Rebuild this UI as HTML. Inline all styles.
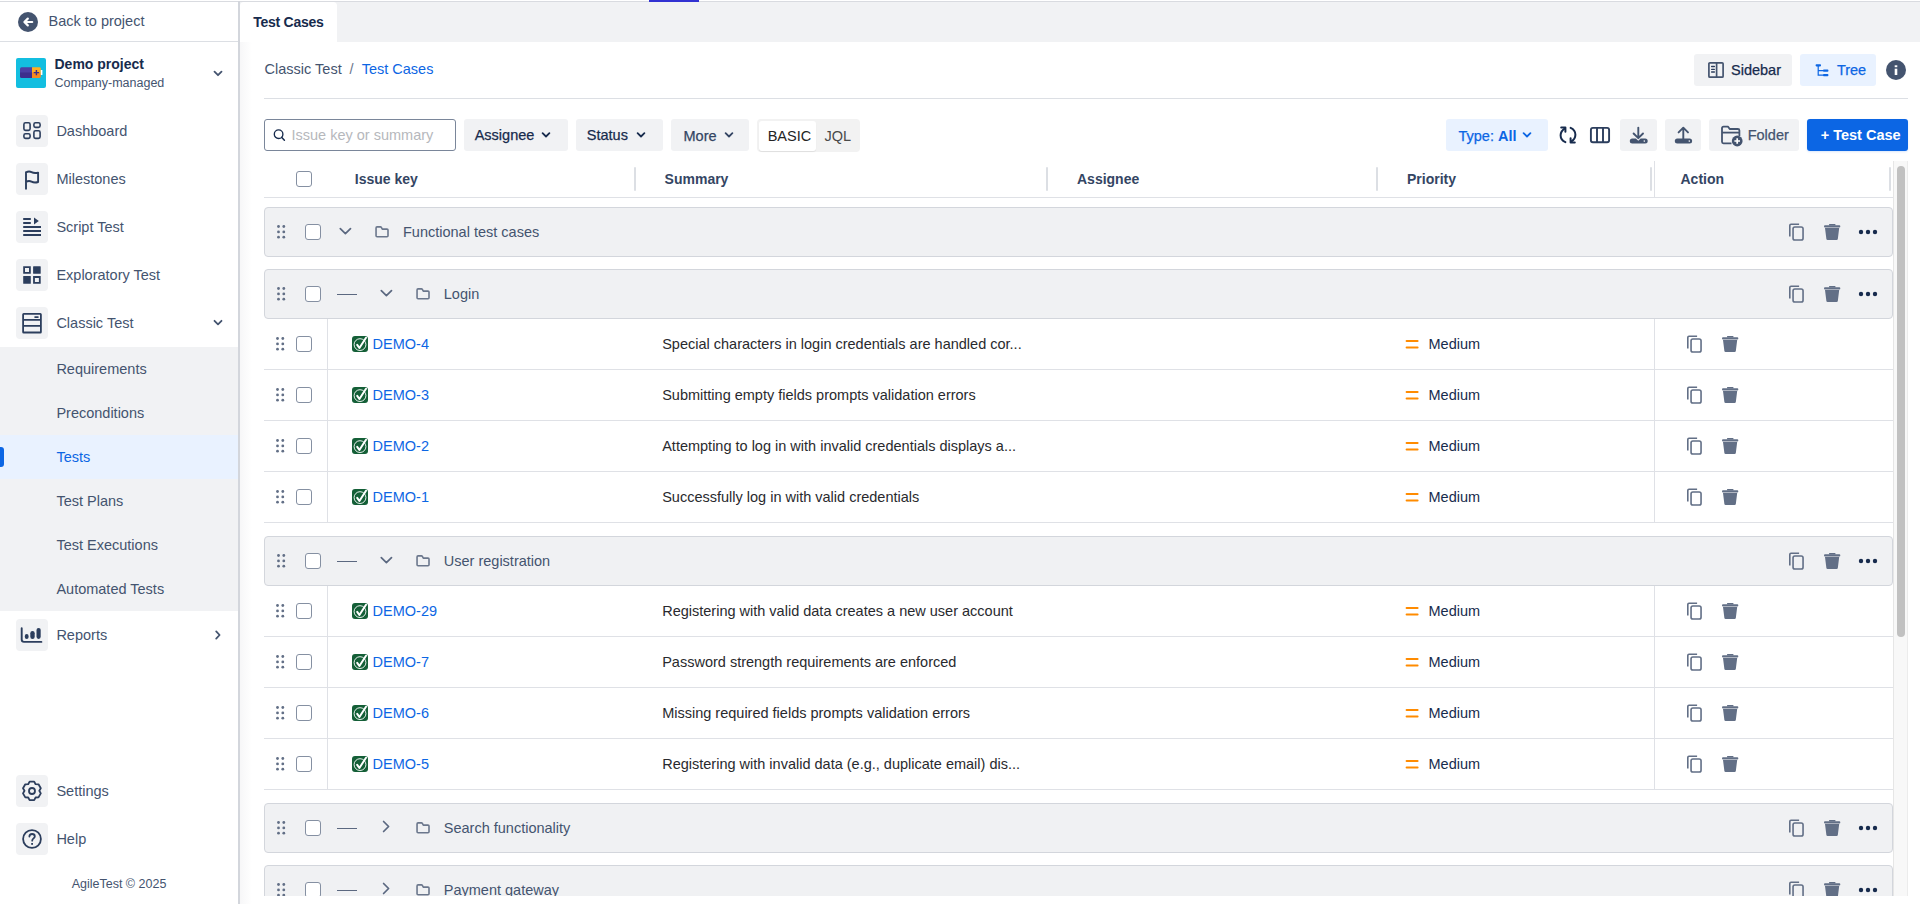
<!DOCTYPE html><html><head><meta charset="utf-8"><style>
*{box-sizing:border-box}
html,body{margin:0;padding:0}
body{width:1920px;height:904px;overflow:hidden;position:relative;background:#fff;font-family:"Liberation Sans", sans-serif;}
.a{position:absolute;display:block}
.t{position:absolute;white-space:nowrap;line-height:20px;font-family:"Liberation Sans", sans-serif;}
</style></head><body><div class="a" style="left:0px;top:1px;width:1920px;height:1px;background:#d9dbe0"></div>
<div class="a" style="left:238px;top:1px;width:2px;height:903px;background:#d3d6dc"></div>
<div class="a" style="left:240px;top:42px;width:12px;height:862px;background:linear-gradient(to right,#f7f7f8,#ffffff)"></div>
<svg class="a" style="left:18px;top:12px" width="20" height="20" viewBox="0 0 20 20"><circle cx="10" cy="10" r="10" fill="#44546f"/><path d="M14.2 10H6.6M9.8 6.6L6.4 10l3.4 3.4" stroke="#fff" stroke-width="2.2" fill="none" stroke-linecap="round" stroke-linejoin="round"/></svg>
<div class="t" style="left:48.5px;top:11.18px;font-size:14.5px;color:#44546f;">Back to project</div>
<div class="a" style="left:0px;top:41px;width:238px;height:1px;background:#dcdfe4"></div>
<svg class="a" style="left:16px;top:58px" width="30" height="30" viewBox="0 0 30 30"><rect width="30" height="30" rx="2" fill="#13bee0"/><path d="M5.5 9.2H16.5V16H4V10.7Q4 9.2 5.5 9.2z" fill="#4b3fa3"/><path d="M4 14.6H16V19.9H5.5Q4 19.9 4 18.4z" fill="#3d2f8c"/><path d="M16 9.2H23.4Q24.8 9.2 24.8 10.6V16H16z" fill="#ffae22"/><path d="M16 14.6H24.8V18.5Q24.8 19.9 23.4 19.9H16z" fill="#f78a1f"/><rect x="24.8" y="12" width="1.6" height="5" fill="#fff"/><path d="M20.4 11.9v5.4M17.7 14.6h5.4" stroke="#3b2b8a" stroke-width="1.4"/></svg>
<div class="t" style="left:54.5px;top:53.75px;font-size:14px;color:#172b4d;font-weight:bold;">Demo project</div>
<div class="t" style="left:54.5px;top:73.17px;font-size:12.5px;color:#44546f;">Company-managed</div>
<svg class="a" style="left:212px;top:69px" width="12" height="8" viewBox="0 0 12 8"><path d="M2.5 2.7l3.5 3.5 3.5-3.5" stroke="#44546f" stroke-width="1.8" fill="none" stroke-linecap="round" stroke-linejoin="round"/></svg>
<div class="a" style="left:16px;top:115px;width:32px;height:32px;background:#f1f2f4;border-radius:4px"></div>
<svg class="a" style="left:16px;top:115px" width="32" height="32" viewBox="0 0 32 32"><g fill="none" stroke="#2c3e5d" stroke-width="1.6"><rect x="7.9" y="7.8" width="6.2" height="7.6" rx="1.6"/><rect x="17.9" y="7.8" width="6.2" height="4.6" rx="1.6"/><rect x="7.9" y="18.8" width="6.2" height="4.6" rx="1.6"/><rect x="17.9" y="15.8" width="6.2" height="7.6" rx="1.6"/></g></svg>
<div class="t" style="left:56.4px;top:120.98px;font-size:14.5px;color:#44546f;">Dashboard</div>
<div class="a" style="left:16px;top:163px;width:32px;height:32px;background:#f1f2f4;border-radius:4px"></div>
<svg class="a" style="left:16px;top:163px" width="32" height="32" viewBox="0 0 32 32"><path d="M10 26.6V8.4M10 9.3c2-1.1 3.9-1.1 5.5-.2 1.6.9 3.6 1.4 6.6.5V19c-3 1-5 .5-6.6-.4-1.6-.9-3.5-.9-5.5.2" fill="none" stroke="#2c3e5d" stroke-width="1.9" stroke-linejoin="round"/></svg>
<div class="t" style="left:56.4px;top:168.98px;font-size:14.5px;color:#44546f;">Milestones</div>
<div class="a" style="left:16px;top:211px;width:32px;height:32px;background:#f1f2f4;border-radius:4px"></div>
<svg class="a" style="left:16px;top:211px" width="32" height="32" viewBox="0 0 32 32"><g stroke="#2c3e5d" stroke-width="1.8"><path d="M7.2 8h7.6M7.2 12h7.6M7.2 16h17.8M7.2 20h17.8M7.2 24h17.8"/></g><path d="M18 6.4v7.2l4.8-3.6z" fill="#2c3e5d"/></svg>
<div class="t" style="left:56.4px;top:216.98px;font-size:14.5px;color:#44546f;">Script Test</div>
<div class="a" style="left:16px;top:259px;width:32px;height:32px;background:#f1f2f4;border-radius:4px"></div>
<svg class="a" style="left:16px;top:259px" width="32" height="32" viewBox="0 0 32 32"><g fill="#2c3e5d"><path fill-rule="evenodd" d="M7.2 7.2h7.6v7.6H7.2zM9 9v4h4V9z"/><rect x="17.1" y="7.2" width="7.6" height="7.6" rx=".5"/><rect x="7.2" y="17.1" width="7.6" height="7.6" rx=".5"/><path fill-rule="evenodd" d="M17.1 17.1h7.6v7.6h-7.6zM18.9 18.9v4h4v-4z"/></g></svg>
<div class="t" style="left:56.4px;top:264.98px;font-size:14.5px;color:#44546f;">Exploratory Test</div>
<div class="a" style="left:16px;top:307px;width:32px;height:32px;background:#f1f2f4;border-radius:4px"></div>
<svg class="a" style="left:16px;top:307px" width="32" height="32" viewBox="0 0 32 32"><g fill="none" stroke="#2c3e5d" stroke-width="1.8"><rect x="7.1" y="6.9" width="17.8" height="18.6" rx=".6"/><path d="M7.1 12.9h17.8M7.1 18.9h17.8"/></g><rect x="18.2" y="9.2" width="4.6" height="1.8" rx=".9" fill="#2c3e5d"/></svg>
<div class="t" style="left:56.4px;top:312.98px;font-size:14.5px;color:#44546f;">Classic Test</div>
<svg class="a" style="left:210px;top:317px" width="16" height="12" viewBox="0 0 16 12"><path d="M4.5 3.8l3.5 3.5 3.5-3.5" stroke="#44546f" stroke-width="1.8" fill="none" stroke-linecap="round" stroke-linejoin="round"/></svg>
<div class="a" style="left:0px;top:347px;width:238px;height:264px;background:#f1f2f4"></div>
<div class="a" style="left:0px;top:435px;width:238px;height:44px;background:#e9f2ff"></div>
<div class="a" style="left:0px;top:447px;width:4px;height:20px;background:#0c66e4;border-radius:0 3px 3px 0"></div>
<div class="t" style="left:56.4px;top:358.98px;font-size:14.5px;color:#44546f;">Requirements</div>
<div class="t" style="left:56.4px;top:402.98px;font-size:14.5px;color:#44546f;">Preconditions</div>
<div class="t" style="left:56.4px;top:446.98px;font-size:14.5px;color:#0c66e4;">Tests</div>
<div class="t" style="left:56.4px;top:490.98px;font-size:14.5px;color:#44546f;">Test Plans</div>
<div class="t" style="left:56.4px;top:534.98px;font-size:14.5px;color:#44546f;">Test Executions</div>
<div class="t" style="left:56.4px;top:578.98px;font-size:14.5px;color:#44546f;">Automated Tests</div>
<div class="a" style="left:16px;top:619px;width:32px;height:32px;background:#f1f2f4;border-radius:4px"></div>
<svg class="a" style="left:16px;top:619px" width="32" height="32" viewBox="0 0 32 32"><g fill="none" stroke="#2c3e5d" stroke-linecap="round"><path d="M5.7 9.2v11.4c0 1.6.9 2.3 2.3 2.3h17.4" stroke-width="1.9"/></g><g fill="#2c3e5d"><rect x="8.8" y="15" width="3.8" height="4.9" rx="1.9"/><rect x="14.3" y="12.1" width="4.4" height="7.8" rx="2.2"/><rect x="20.5" y="9" width="4.2" height="10.9" rx="2.1"/></g></svg>
<div class="t" style="left:56.4px;top:624.98px;font-size:14.5px;color:#44546f;">Reports</div>
<svg class="a" style="left:210px;top:629px" width="16" height="12" viewBox="0 0 16 12"><path d="M6.2 2.4l3.4 3.6-3.4 3.6" stroke="#44546f" stroke-width="1.8" fill="none" stroke-linecap="round" stroke-linejoin="round"/></svg>
<div class="a" style="left:16px;top:775px;width:32px;height:32px;background:#f1f2f4;border-radius:4px"></div>
<svg class="a" style="left:16px;top:775px" width="32" height="32" viewBox="0 0 32 32"><path fill="none" stroke="#2c3e5d" stroke-width="1.8" stroke-linejoin="round" d="M13.6 6.6h4.6l1.4 2.6 2.9.1 2.3 4-1.5 2.5 1.5 2.6-2.3 4-2.9.1-1.4 2.6h-4.6l-1.4-2.6-2.9-.1-2.3-4 1.5-2.6-1.5-2.5 2.3-4 2.9-.1z"/><circle cx="16" cy="16" r="3" fill="none" stroke="#2c3e5d" stroke-width="1.8"/></svg>
<div class="t" style="left:56.4px;top:780.98px;font-size:14.5px;color:#44546f;">Settings</div>
<div class="a" style="left:16px;top:823px;width:32px;height:32px;background:#f1f2f4;border-radius:4px"></div>
<svg class="a" style="left:16px;top:823px" width="32" height="32" viewBox="0 0 32 32"><circle cx="16" cy="16" r="8.9" fill="none" stroke="#2c3e5d" stroke-width="1.8"/><path d="M13.4 13.6c0-1.6 1.2-2.6 2.7-2.6s2.7 1 2.7 2.4c0 1.9-2.6 2.1-2.6 4.3" fill="none" stroke="#2c3e5d" stroke-width="1.8" stroke-linecap="round"/><rect x="15.2" y="20" width="1.8" height="1.8" fill="#2c3e5d"/></svg>
<div class="t" style="left:56.4px;top:828.98px;font-size:14.5px;color:#44546f;">Help</div>
<div class="t" style="left:0;width:238px;text-align:center;top:876.47px;font-size:12.5px;color:#44546f;line-height:16px">AgileTest © 2025</div>
<div class="a" style="left:240px;top:2px;width:1680px;height:40px;background:#f1f2f4"></div>
<div class="a" style="left:240px;top:2px;width:97px;height:40px;background:#fff;border-radius:4px 4px 0 0"></div>
<div class="a" style="left:649px;top:0px;width:50px;height:2px;background:#3232d2"></div>
<div class="t" style="left:253.2px;top:12.05px;font-size:14px;color:#172b4d;font-weight:bold;letter-spacing:-0.25px;">Test Cases</div>
<div class="t" style="left:264.6px;top:58.88px;font-size:14.5px;color:#44546f;">Classic Test</div>
<div class="t" style="left:349.5px;top:58.88px;font-size:14.5px;color:#6b778c;">/</div>
<div class="t" style="left:361.7px;top:58.88px;font-size:14.5px;color:#0c66e4;">Test Cases</div>
<div class="a" style="left:264px;top:98px;width:1644px;height:1px;background:#dcdfe4"></div>
<div class="a" style="left:1694px;top:54px;width:98px;height:32px;background:#f1f2f4;border-radius:3px"></div>
<svg class="a" style="left:1706px;top:60px" width="20" height="20" viewBox="0 0 20 20"><g fill="none" stroke="#44546f" stroke-width="1.7"><rect x="2.9" y="2.8" width="14.2" height="14.4" rx="1"/><path d="M10.6 2.8v14.4"/></g><g stroke="#2c3e5d" stroke-width="1.3" stroke-linecap="round"><path d="M5.6 6.5h2.8M5.6 9.3h2.8M5.6 12h2.8"/></g></svg>
<div class="t" style="left:1731px;top:59.98px;font-size:14.5px;color:#172b4d;-webkit-text-stroke:0.25px currentColor;">Sidebar</div>
<div class="a" style="left:1800px;top:54px;width:76px;height:32px;background:#e9f2ff;border-radius:3px"></div>
<svg class="a" style="left:1814px;top:62px" width="16" height="16" viewBox="0 0 16 16"><g fill="#0c66e4"><rect x="1.6" y="2.2" width="5.4" height="2.2" rx=".8"/><rect x="9" y="7.5" width="5.4" height="2.2" rx=".8"/><rect x="9" y="12" width="5.4" height="2.2" rx=".8"/></g><path d="M4.2 4v9.1h5M4.2 8.6h5" fill="none" stroke="#0c66e4" stroke-width="1.2"/></svg>
<div class="t" style="left:1836.9px;top:59.98px;font-size:14.5px;color:#0c66e4;-webkit-text-stroke:0.25px currentColor;">Tree</div>
<svg class="a" style="left:1886px;top:60px" width="20" height="20" viewBox="0 0 20 20"><circle cx="10" cy="10" r="10" fill="#44546f"/><rect x="8.7" y="5.3" width="2.6" height="1.9" fill="#fff"/><rect x="8.7" y="8.7" width="2.6" height="6.3" fill="#fff"/></svg>
<div class="a" style="left:264px;top:119px;width:192px;height:32px;border:1px solid #7a869a;border-radius:3px;background:#fff"></div>
<svg class="a" style="left:272px;top:127px" width="16" height="16" viewBox="0 0 16 16"><circle cx="6.6" cy="7.2" r="4.3" fill="none" stroke="#172b4d" stroke-width="1.35"/><path d="M9.8 10.4l2.6 2.8" stroke="#172b4d" stroke-width="1.5" stroke-linecap="round"/></svg>
<div class="t" style="left:291.5px;top:124.98px;font-size:14.5px;color:#b6b8bc;">Issue key or summary</div>
<div class="a" style="left:464px;top:119px;width:104px;height:32px;background:#f1f2f4;border-radius:3px"></div>
<div class="t" style="left:474.7px;top:124.98px;font-size:14.5px;color:#172b4d;-webkit-text-stroke:0.25px currentColor;">Assignee</div>
<svg class="a" style="left:541px;top:131px" width="10" height="8" viewBox="0 0 10 8"><path d="M1.6 2.2l3.4 3.3 3.4-3.3" stroke="#172b4d" stroke-width="1.8" fill="none" stroke-linecap="round" stroke-linejoin="round"/></svg>
<div class="a" style="left:576px;top:119px;width:87px;height:32px;background:#f1f2f4;border-radius:3px"></div>
<div class="t" style="left:586.8px;top:124.98px;font-size:14.5px;color:#172b4d;-webkit-text-stroke:0.25px currentColor;">Status</div>
<svg class="a" style="left:636px;top:131px" width="10" height="8" viewBox="0 0 10 8"><path d="M1.6 2.2l3.4 3.3 3.4-3.3" stroke="#172b4d" stroke-width="1.8" fill="none" stroke-linecap="round" stroke-linejoin="round"/></svg>
<div class="a" style="left:671px;top:119px;width:78px;height:32px;background:#f1f2f4;border-radius:3px"></div>
<div class="t" style="left:683.5px;top:125.98px;font-size:14.5px;color:#344563;-webkit-text-stroke:0.25px currentColor;">More</div>
<svg class="a" style="left:724px;top:131px" width="10" height="8" viewBox="0 0 10 8"><path d="M1.6 2.2l3.4 3.3 3.4-3.3" stroke="#344563" stroke-width="1.8" fill="none" stroke-linecap="round" stroke-linejoin="round"/></svg>
<div class="a" style="left:757px;top:119px;width:103px;height:33px;background:#f2f2f2;border-radius:4px"></div>
<div class="a" style="left:759px;top:121px;width:57px;height:30px;background:#fff;border-radius:3px;box-shadow:0 1px 1px rgba(0,0,0,.08)"></div>
<div class="t" style="left:767.7px;top:125.98px;font-size:14.5px;color:#242424;">BASIC</div>
<div class="t" style="left:824.4px;top:125.98px;font-size:14.5px;color:#4a4a4a;">JQL</div>
<div class="a" style="left:1446px;top:119px;width:102px;height:32px;background:#e9f2ff;border-radius:3px"></div>
<div class="t" style="left:1458.5px;top:126.00px;font-size:14.5px;color:#0c66e4;-webkit-text-stroke:0.25px currentColor">Type: <b style="-webkit-text-stroke:0">All</b></div>
<svg class="a" style="left:1522px;top:131px" width="10" height="8" viewBox="0 0 10 8"><path d="M1.6 2.2l3.4 3.3 3.4-3.3" stroke="#0c66e4" stroke-width="1.8" fill="none" stroke-linecap="round" stroke-linejoin="round"/></svg>
<svg class="a" style="left:1558px;top:125px" width="20" height="20" viewBox="0 0 20 20"><g fill="none" stroke="#172b4d" stroke-width="2" stroke-linecap="round" stroke-linejoin="round"><path d="M7.4 17.2C4.2 15.8 2.6 13 2.6 10.3c0-2.8 1.5-5.2 4.3-7"/><path d="M3.2 2.5h4.2v4.2"/><path d="M12.6 2.8c3.2 1.4 4.8 4.2 4.8 6.9 0 2.8-1.5 5.2-4.3 7"/><path d="M16.8 17.5h-4.2v-4.2"/></g></svg>
<svg class="a" style="left:1588px;top:125px" width="24" height="20" viewBox="0 0 24 20"><g fill="none" stroke="#2c3e5d" stroke-width="1.9"><rect x="2.9" y="2.9" width="18.2" height="14.4" rx="2"/><path d="M9 2.9v14.4M15 2.9v14.4"/></g></svg>
<div class="a" style="left:1620px;top:119px;width:37px;height:32px;background:#f1f2f4;border-radius:3px"></div>
<svg class="a" style="left:1628px;top:125px" width="20" height="20" viewBox="0 0 20 20"><g fill="none" stroke="#44546f" stroke-width="1.9" stroke-linecap="round" stroke-linejoin="round"><path d="M10.3 2.6v10.2M5.6 8.5l4.7 4.7 4.7-4.7"/></g><path d="M4.3 13.6h3.6l2.4 2.2 2.4-2.2h4.5a2.5 2.5 0 0 1 0 5H4.3a2.5 2.5 0 0 1 0-5z" fill="#44546f"/><circle cx="16.3" cy="16.1" r="0.8" fill="#f1f2f4"/></svg>
<div class="a" style="left:1665px;top:119px;width:36px;height:32px;background:#f1f2f4;border-radius:3px"></div>
<svg class="a" style="left:1673px;top:125px" width="20" height="20" viewBox="0 0 20 20"><g fill="none" stroke="#44546f" stroke-width="1.9" stroke-linecap="round" stroke-linejoin="round"><path d="M10.3 3v11.6M5.6 7.4l4.7-4.7 4.7 4.7"/></g><path d="M4.3 13.6h12.3a2.5 2.5 0 0 1 0 5H4.3a2.5 2.5 0 0 1 0-5z" fill="#44546f"/><circle cx="16.3" cy="16.1" r="0.8" fill="#f1f2f4"/></svg>
<div class="a" style="left:1709px;top:119px;width:90px;height:32px;background:#f1f2f4;border-radius:3px"></div>
<svg class="a" style="left:1719px;top:124px" width="26" height="24" viewBox="0 0 26 24"><g fill="none" stroke="#44546f" stroke-width="1.8" stroke-linejoin="round"><path d="M3 4.2c0-1 .5-1.5 1.5-1.5h4.6l1.6 2.3h8.2c1 0 1.5.5 1.5 1.5v5.5"/><path d="M3 4v13.8c0 1 .5 1.5 1.5 1.5h8"/><path d="M3 8.6h17.4"/></g><circle cx="18.2" cy="17" r="5.4" fill="#44546f"/><path d="M18.2 14.2v5.6M15.4 17h5.6" stroke="#fff" stroke-width="1.7"/></svg>
<div class="t" style="left:1747.7px;top:124.98px;font-size:14.5px;color:#44546f;-webkit-text-stroke:0.25px currentColor;">Folder</div>
<div class="a" style="left:1807px;top:119px;width:101px;height:32px;background:#0c66e4;border-radius:3px;box-shadow:0 1px 2px rgba(12,102,228,.15)"></div>
<div class="t" style="left:1820.7px;top:124.98px;font-size:14.5px;color:#fff;font-weight:bold;">+ Test Case</div>
<div class="a" style="left:0;top:0;width:1920px;height:896px;overflow:hidden">
<div class="a" style="left:1893px;top:161px;width:15px;height:735px;background:#f8f8f8;border-left:1px solid #e6e6e6;border-right:1px solid #ececec"></div>
<div class="a" style="left:1897px;top:166px;width:8px;height:471px;background:#c1c1c1;border-radius:4px"></div>
<div class="a" style="left:296px;top:171px;width:16px;height:16px;border:1.5px solid #8590a2;border-radius:3px;background:#fff"></div>
<div class="t" style="left:354.8px;top:169.15px;font-size:14px;color:#344563;font-weight:bold;">Issue key</div>
<div class="t" style="left:664.6px;top:169.15px;font-size:14px;color:#344563;font-weight:bold;">Summary</div>
<div class="t" style="left:1077px;top:169.15px;font-size:14px;color:#344563;font-weight:bold;">Assignee</div>
<div class="t" style="left:1407px;top:169.15px;font-size:14px;color:#344563;font-weight:bold;">Priority</div>
<div class="t" style="left:1680.5px;top:169.15px;font-size:14px;color:#344563;font-weight:bold;">Action</div>
<div class="a" style="left:634px;top:167px;width:2px;height:24px;background:#dcdfe4;border-radius:1px"></div>
<div class="a" style="left:1046px;top:167px;width:2px;height:24px;background:#dcdfe4;border-radius:1px"></div>
<div class="a" style="left:1376px;top:167px;width:2px;height:24px;background:#dcdfe4;border-radius:1px"></div>
<div class="a" style="left:1650px;top:167px;width:2px;height:24px;background:#dcdfe4;border-radius:1px"></div>
<div class="a" style="left:1889px;top:167px;width:2px;height:24px;background:#dcdfe4;border-radius:1px"></div>
<div class="a" style="left:1654px;top:161px;width:1px;height:37px;background:#dfe1e6"></div>
<div class="a" style="left:264px;top:197px;width:1629px;height:1px;background:#dfe1e6"></div>
<div class="a" style="left:264px;top:207px;width:1629px;height:50px;background:#f0f1f3;border:1px solid #d3d6dc;border-radius:4px"></div>
<svg class="a" style="left:277px;top:225px" width="10" height="15" viewBox="0 0 10 15"><g fill="#626f86"><circle cx="1.5" cy="1.5" r="1.4"/><circle cx="6.8" cy="1.5" r="1.4"/><circle cx="1.5" cy="6.9" r="1.4"/><circle cx="6.8" cy="6.9" r="1.4"/><circle cx="1.5" cy="12.2" r="1.4"/><circle cx="6.8" cy="12.2" r="1.4"/></g></svg>
<div class="a" style="left:305px;top:224px;width:16px;height:16px;border:1.5px solid #8590a2;border-radius:3px;background:#fff"></div>
<svg class="a" style="left:339px;top:227px" width="13" height="9" viewBox="0 0 13 9"><path d="M1.3 1.6l5.1 5.1 5.1-5.1" stroke="#5b6880" stroke-width="1.7" fill="none" stroke-linecap="round" stroke-linejoin="round"/></svg>
<svg class="a" style="left:374px;top:225px" width="16" height="14" viewBox="0 0 16 14"><path d="M2.05 10.8V2.9Q2.05 1.9 3.05 1.9H6.4Q7.1 1.9 7.5 2.6L8.3 4.1H13Q14 4.1 14 5.1V10.8Q14 11.8 13 11.8H3.05Q2.05 11.8 2.05 10.8Z" fill="none" stroke="#6b778c" stroke-width="1.6" stroke-linejoin="round"/></svg>
<div class="t" style="left:403px;top:222.38px;font-size:14.5px;color:#44546f;">Functional test cases</div>
<svg class="a" style="left:1788px;top:223px" width="18" height="19" viewBox="0 0 18 19"><g fill="none" stroke="#626f86" stroke-width="1.6"><path d="M1.8 13.4V2.4c0-.8.4-1.2 1.2-1.2h8.1"/><rect x="5.05" y="4.05" width="10" height="12.9" rx="1.8"/></g></svg>
<svg class="a" style="left:1824px;top:224px" width="17" height="17" viewBox="0 0 17 17"><g fill="#626f86"><rect x="5" y="0" width="6.5" height="1.6" rx=".6"/><rect x="0" y="1.2" width="16.3" height="2.2" rx="1"/><path d="M1 4.1h14.2l-1.4 10.9c-.1.7-.5 1-1.2 1H3.6c-.7 0-1.1-.3-1.2-1z"/></g></svg>
<svg class="a" style="left:1858px;top:228px" width="22" height="8" viewBox="0 0 22 8"><g fill="#172b4d"><circle cx="3" cy="4" r="2.2"/><circle cx="10" cy="4" r="2.2"/><circle cx="17" cy="4" r="2.2"/></g></svg>
<div class="a" style="left:264px;top:269px;width:1629px;height:50px;background:#f0f1f3;border:1px solid #d3d6dc;border-radius:4px"></div>
<svg class="a" style="left:277px;top:287px" width="10" height="15" viewBox="0 0 10 15"><g fill="#626f86"><circle cx="1.5" cy="1.5" r="1.4"/><circle cx="6.8" cy="1.5" r="1.4"/><circle cx="1.5" cy="6.9" r="1.4"/><circle cx="6.8" cy="6.9" r="1.4"/><circle cx="1.5" cy="12.2" r="1.4"/><circle cx="6.8" cy="12.2" r="1.4"/></g></svg>
<div class="a" style="left:305px;top:286px;width:16px;height:16px;border:1.5px solid #8590a2;border-radius:3px;background:#fff"></div>
<div class="a" style="left:337px;top:294px;width:20px;height:1px;background:#5b6880"></div>
<svg class="a" style="left:380px;top:289px" width="13" height="9" viewBox="0 0 13 9"><path d="M1.3 1.6l5.1 5.1 5.1-5.1" stroke="#5b6880" stroke-width="1.7" fill="none" stroke-linecap="round" stroke-linejoin="round"/></svg>
<svg class="a" style="left:415px;top:287px" width="16" height="14" viewBox="0 0 16 14"><path d="M2.05 10.8V2.9Q2.05 1.9 3.05 1.9H6.4Q7.1 1.9 7.5 2.6L8.3 4.1H13Q14 4.1 14 5.1V10.8Q14 11.8 13 11.8H3.05Q2.05 11.8 2.05 10.8Z" fill="none" stroke="#6b778c" stroke-width="1.6" stroke-linejoin="round"/></svg>
<div class="t" style="left:443.8px;top:284.38px;font-size:14.5px;color:#44546f;">Login</div>
<svg class="a" style="left:1788px;top:285px" width="18" height="19" viewBox="0 0 18 19"><g fill="none" stroke="#626f86" stroke-width="1.6"><path d="M1.8 13.4V2.4c0-.8.4-1.2 1.2-1.2h8.1"/><rect x="5.05" y="4.05" width="10" height="12.9" rx="1.8"/></g></svg>
<svg class="a" style="left:1824px;top:286px" width="17" height="17" viewBox="0 0 17 17"><g fill="#626f86"><rect x="5" y="0" width="6.5" height="1.6" rx=".6"/><rect x="0" y="1.2" width="16.3" height="2.2" rx="1"/><path d="M1 4.1h14.2l-1.4 10.9c-.1.7-.5 1-1.2 1H3.6c-.7 0-1.1-.3-1.2-1z"/></g></svg>
<svg class="a" style="left:1858px;top:290px" width="22" height="8" viewBox="0 0 22 8"><g fill="#172b4d"><circle cx="3" cy="4" r="2.2"/><circle cx="10" cy="4" r="2.2"/><circle cx="17" cy="4" r="2.2"/></g></svg>
<div class="a" style="left:264px;top:369px;width:1629px;height:1px;background:#dfe1e6"></div>
<div class="a" style="left:327px;top:319px;width:1px;height:50px;background:#dfe1e6"></div>
<div class="a" style="left:1654px;top:319px;width:1px;height:50px;background:#dfe1e6"></div>
<svg class="a" style="left:276px;top:337px" width="10" height="15" viewBox="0 0 10 15"><g fill="#626f86"><circle cx="1.5" cy="1.5" r="1.4"/><circle cx="6.8" cy="1.5" r="1.4"/><circle cx="1.5" cy="6.9" r="1.4"/><circle cx="6.8" cy="6.9" r="1.4"/><circle cx="1.5" cy="12.2" r="1.4"/><circle cx="6.8" cy="12.2" r="1.4"/></g></svg>
<div class="a" style="left:296px;top:336px;width:16px;height:16px;border:1.5px solid #8590a2;border-radius:3px;background:#fff"></div>
<svg class="a" style="left:352px;top:336px" width="16" height="16" viewBox="0 0 16 16"><rect width="16" height="16" rx="3" fill="#145f37"/><circle cx="8" cy="8.6" r="5.9" fill="none" stroke="#fff" stroke-width="0.9"/><path d="M5.2 8.9l2.2 3.1L14 1.7" fill="none" stroke="#fff" stroke-width="2" stroke-linejoin="round" stroke-linecap="round"/></svg>
<div class="t" style="left:372.6px;top:334.18px;font-size:14.5px;color:#0c66e4;">DEMO-4</div>
<div class="t" style="left:662.2px;top:334.18px;font-size:14.5px;color:#292a2e;">Special characters in login credentials are handled cor...</div>
<svg class="a" style="left:1405px;top:339px" width="14" height="10" viewBox="0 0 14 10"><path d="M1.6 2h11M1.6 8.6h11" stroke="#ff8b00" stroke-width="2" stroke-linecap="round"/></svg>
<div class="t" style="left:1428.5px;top:334.18px;font-size:14.5px;color:#172b4d;">Medium</div>
<svg class="a" style="left:1686px;top:335px" width="18" height="19" viewBox="0 0 18 19"><g fill="none" stroke="#626f86" stroke-width="1.6"><path d="M1.8 13.4V2.4c0-.8.4-1.2 1.2-1.2h8.1"/><rect x="5.05" y="4.05" width="10" height="12.9" rx="1.8"/></g></svg>
<svg class="a" style="left:1722px;top:336px" width="17" height="17" viewBox="0 0 17 17"><g fill="#626f86"><rect x="5" y="0" width="6.5" height="1.6" rx=".6"/><rect x="0" y="1.2" width="16.3" height="2.2" rx="1"/><path d="M1 4.1h14.2l-1.4 10.9c-.1.7-.5 1-1.2 1H3.6c-.7 0-1.1-.3-1.2-1z"/></g></svg>
<div class="a" style="left:264px;top:420px;width:1629px;height:1px;background:#dfe1e6"></div>
<div class="a" style="left:327px;top:370px;width:1px;height:50px;background:#dfe1e6"></div>
<div class="a" style="left:1654px;top:370px;width:1px;height:50px;background:#dfe1e6"></div>
<svg class="a" style="left:276px;top:388px" width="10" height="15" viewBox="0 0 10 15"><g fill="#626f86"><circle cx="1.5" cy="1.5" r="1.4"/><circle cx="6.8" cy="1.5" r="1.4"/><circle cx="1.5" cy="6.9" r="1.4"/><circle cx="6.8" cy="6.9" r="1.4"/><circle cx="1.5" cy="12.2" r="1.4"/><circle cx="6.8" cy="12.2" r="1.4"/></g></svg>
<div class="a" style="left:296px;top:387px;width:16px;height:16px;border:1.5px solid #8590a2;border-radius:3px;background:#fff"></div>
<svg class="a" style="left:352px;top:387px" width="16" height="16" viewBox="0 0 16 16"><rect width="16" height="16" rx="3" fill="#145f37"/><circle cx="8" cy="8.6" r="5.9" fill="none" stroke="#fff" stroke-width="0.9"/><path d="M5.2 8.9l2.2 3.1L14 1.7" fill="none" stroke="#fff" stroke-width="2" stroke-linejoin="round" stroke-linecap="round"/></svg>
<div class="t" style="left:372.6px;top:385.18px;font-size:14.5px;color:#0c66e4;">DEMO-3</div>
<div class="t" style="left:662.2px;top:385.18px;font-size:14.5px;color:#292a2e;">Submitting empty fields prompts validation errors</div>
<svg class="a" style="left:1405px;top:390px" width="14" height="10" viewBox="0 0 14 10"><path d="M1.6 2h11M1.6 8.6h11" stroke="#ff8b00" stroke-width="2" stroke-linecap="round"/></svg>
<div class="t" style="left:1428.5px;top:385.18px;font-size:14.5px;color:#172b4d;">Medium</div>
<svg class="a" style="left:1686px;top:386px" width="18" height="19" viewBox="0 0 18 19"><g fill="none" stroke="#626f86" stroke-width="1.6"><path d="M1.8 13.4V2.4c0-.8.4-1.2 1.2-1.2h8.1"/><rect x="5.05" y="4.05" width="10" height="12.9" rx="1.8"/></g></svg>
<svg class="a" style="left:1722px;top:387px" width="17" height="17" viewBox="0 0 17 17"><g fill="#626f86"><rect x="5" y="0" width="6.5" height="1.6" rx=".6"/><rect x="0" y="1.2" width="16.3" height="2.2" rx="1"/><path d="M1 4.1h14.2l-1.4 10.9c-.1.7-.5 1-1.2 1H3.6c-.7 0-1.1-.3-1.2-1z"/></g></svg>
<div class="a" style="left:264px;top:471px;width:1629px;height:1px;background:#dfe1e6"></div>
<div class="a" style="left:327px;top:421px;width:1px;height:50px;background:#dfe1e6"></div>
<div class="a" style="left:1654px;top:421px;width:1px;height:50px;background:#dfe1e6"></div>
<svg class="a" style="left:276px;top:439px" width="10" height="15" viewBox="0 0 10 15"><g fill="#626f86"><circle cx="1.5" cy="1.5" r="1.4"/><circle cx="6.8" cy="1.5" r="1.4"/><circle cx="1.5" cy="6.9" r="1.4"/><circle cx="6.8" cy="6.9" r="1.4"/><circle cx="1.5" cy="12.2" r="1.4"/><circle cx="6.8" cy="12.2" r="1.4"/></g></svg>
<div class="a" style="left:296px;top:438px;width:16px;height:16px;border:1.5px solid #8590a2;border-radius:3px;background:#fff"></div>
<svg class="a" style="left:352px;top:438px" width="16" height="16" viewBox="0 0 16 16"><rect width="16" height="16" rx="3" fill="#145f37"/><circle cx="8" cy="8.6" r="5.9" fill="none" stroke="#fff" stroke-width="0.9"/><path d="M5.2 8.9l2.2 3.1L14 1.7" fill="none" stroke="#fff" stroke-width="2" stroke-linejoin="round" stroke-linecap="round"/></svg>
<div class="t" style="left:372.6px;top:436.18px;font-size:14.5px;color:#0c66e4;">DEMO-2</div>
<div class="t" style="left:662.2px;top:436.18px;font-size:14.5px;color:#292a2e;">Attempting to log in with invalid credentials displays a...</div>
<svg class="a" style="left:1405px;top:441px" width="14" height="10" viewBox="0 0 14 10"><path d="M1.6 2h11M1.6 8.6h11" stroke="#ff8b00" stroke-width="2" stroke-linecap="round"/></svg>
<div class="t" style="left:1428.5px;top:436.18px;font-size:14.5px;color:#172b4d;">Medium</div>
<svg class="a" style="left:1686px;top:437px" width="18" height="19" viewBox="0 0 18 19"><g fill="none" stroke="#626f86" stroke-width="1.6"><path d="M1.8 13.4V2.4c0-.8.4-1.2 1.2-1.2h8.1"/><rect x="5.05" y="4.05" width="10" height="12.9" rx="1.8"/></g></svg>
<svg class="a" style="left:1722px;top:438px" width="17" height="17" viewBox="0 0 17 17"><g fill="#626f86"><rect x="5" y="0" width="6.5" height="1.6" rx=".6"/><rect x="0" y="1.2" width="16.3" height="2.2" rx="1"/><path d="M1 4.1h14.2l-1.4 10.9c-.1.7-.5 1-1.2 1H3.6c-.7 0-1.1-.3-1.2-1z"/></g></svg>
<div class="a" style="left:264px;top:522px;width:1629px;height:1px;background:#dfe1e6"></div>
<div class="a" style="left:327px;top:472px;width:1px;height:50px;background:#dfe1e6"></div>
<div class="a" style="left:1654px;top:472px;width:1px;height:50px;background:#dfe1e6"></div>
<svg class="a" style="left:276px;top:490px" width="10" height="15" viewBox="0 0 10 15"><g fill="#626f86"><circle cx="1.5" cy="1.5" r="1.4"/><circle cx="6.8" cy="1.5" r="1.4"/><circle cx="1.5" cy="6.9" r="1.4"/><circle cx="6.8" cy="6.9" r="1.4"/><circle cx="1.5" cy="12.2" r="1.4"/><circle cx="6.8" cy="12.2" r="1.4"/></g></svg>
<div class="a" style="left:296px;top:489px;width:16px;height:16px;border:1.5px solid #8590a2;border-radius:3px;background:#fff"></div>
<svg class="a" style="left:352px;top:489px" width="16" height="16" viewBox="0 0 16 16"><rect width="16" height="16" rx="3" fill="#145f37"/><circle cx="8" cy="8.6" r="5.9" fill="none" stroke="#fff" stroke-width="0.9"/><path d="M5.2 8.9l2.2 3.1L14 1.7" fill="none" stroke="#fff" stroke-width="2" stroke-linejoin="round" stroke-linecap="round"/></svg>
<div class="t" style="left:372.6px;top:487.18px;font-size:14.5px;color:#0c66e4;">DEMO-1</div>
<div class="t" style="left:662.2px;top:487.18px;font-size:14.5px;color:#292a2e;">Successfully log in with valid credentials</div>
<svg class="a" style="left:1405px;top:492px" width="14" height="10" viewBox="0 0 14 10"><path d="M1.6 2h11M1.6 8.6h11" stroke="#ff8b00" stroke-width="2" stroke-linecap="round"/></svg>
<div class="t" style="left:1428.5px;top:487.18px;font-size:14.5px;color:#172b4d;">Medium</div>
<svg class="a" style="left:1686px;top:488px" width="18" height="19" viewBox="0 0 18 19"><g fill="none" stroke="#626f86" stroke-width="1.6"><path d="M1.8 13.4V2.4c0-.8.4-1.2 1.2-1.2h8.1"/><rect x="5.05" y="4.05" width="10" height="12.9" rx="1.8"/></g></svg>
<svg class="a" style="left:1722px;top:489px" width="17" height="17" viewBox="0 0 17 17"><g fill="#626f86"><rect x="5" y="0" width="6.5" height="1.6" rx=".6"/><rect x="0" y="1.2" width="16.3" height="2.2" rx="1"/><path d="M1 4.1h14.2l-1.4 10.9c-.1.7-.5 1-1.2 1H3.6c-.7 0-1.1-.3-1.2-1z"/></g></svg>
<div class="a" style="left:264px;top:536px;width:1629px;height:50px;background:#f0f1f3;border:1px solid #d3d6dc;border-radius:4px"></div>
<svg class="a" style="left:277px;top:554px" width="10" height="15" viewBox="0 0 10 15"><g fill="#626f86"><circle cx="1.5" cy="1.5" r="1.4"/><circle cx="6.8" cy="1.5" r="1.4"/><circle cx="1.5" cy="6.9" r="1.4"/><circle cx="6.8" cy="6.9" r="1.4"/><circle cx="1.5" cy="12.2" r="1.4"/><circle cx="6.8" cy="12.2" r="1.4"/></g></svg>
<div class="a" style="left:305px;top:553px;width:16px;height:16px;border:1.5px solid #8590a2;border-radius:3px;background:#fff"></div>
<div class="a" style="left:337px;top:561px;width:20px;height:1px;background:#5b6880"></div>
<svg class="a" style="left:380px;top:556px" width="13" height="9" viewBox="0 0 13 9"><path d="M1.3 1.6l5.1 5.1 5.1-5.1" stroke="#5b6880" stroke-width="1.7" fill="none" stroke-linecap="round" stroke-linejoin="round"/></svg>
<svg class="a" style="left:415px;top:554px" width="16" height="14" viewBox="0 0 16 14"><path d="M2.05 10.8V2.9Q2.05 1.9 3.05 1.9H6.4Q7.1 1.9 7.5 2.6L8.3 4.1H13Q14 4.1 14 5.1V10.8Q14 11.8 13 11.8H3.05Q2.05 11.8 2.05 10.8Z" fill="none" stroke="#6b778c" stroke-width="1.6" stroke-linejoin="round"/></svg>
<div class="t" style="left:443.8px;top:551.38px;font-size:14.5px;color:#44546f;">User registration</div>
<svg class="a" style="left:1788px;top:552px" width="18" height="19" viewBox="0 0 18 19"><g fill="none" stroke="#626f86" stroke-width="1.6"><path d="M1.8 13.4V2.4c0-.8.4-1.2 1.2-1.2h8.1"/><rect x="5.05" y="4.05" width="10" height="12.9" rx="1.8"/></g></svg>
<svg class="a" style="left:1824px;top:553px" width="17" height="17" viewBox="0 0 17 17"><g fill="#626f86"><rect x="5" y="0" width="6.5" height="1.6" rx=".6"/><rect x="0" y="1.2" width="16.3" height="2.2" rx="1"/><path d="M1 4.1h14.2l-1.4 10.9c-.1.7-.5 1-1.2 1H3.6c-.7 0-1.1-.3-1.2-1z"/></g></svg>
<svg class="a" style="left:1858px;top:557px" width="22" height="8" viewBox="0 0 22 8"><g fill="#172b4d"><circle cx="3" cy="4" r="2.2"/><circle cx="10" cy="4" r="2.2"/><circle cx="17" cy="4" r="2.2"/></g></svg>
<div class="a" style="left:264px;top:636px;width:1629px;height:1px;background:#dfe1e6"></div>
<div class="a" style="left:327px;top:586px;width:1px;height:50px;background:#dfe1e6"></div>
<div class="a" style="left:1654px;top:586px;width:1px;height:50px;background:#dfe1e6"></div>
<svg class="a" style="left:276px;top:604px" width="10" height="15" viewBox="0 0 10 15"><g fill="#626f86"><circle cx="1.5" cy="1.5" r="1.4"/><circle cx="6.8" cy="1.5" r="1.4"/><circle cx="1.5" cy="6.9" r="1.4"/><circle cx="6.8" cy="6.9" r="1.4"/><circle cx="1.5" cy="12.2" r="1.4"/><circle cx="6.8" cy="12.2" r="1.4"/></g></svg>
<div class="a" style="left:296px;top:603px;width:16px;height:16px;border:1.5px solid #8590a2;border-radius:3px;background:#fff"></div>
<svg class="a" style="left:352px;top:603px" width="16" height="16" viewBox="0 0 16 16"><rect width="16" height="16" rx="3" fill="#145f37"/><circle cx="8" cy="8.6" r="5.9" fill="none" stroke="#fff" stroke-width="0.9"/><path d="M5.2 8.9l2.2 3.1L14 1.7" fill="none" stroke="#fff" stroke-width="2" stroke-linejoin="round" stroke-linecap="round"/></svg>
<div class="t" style="left:372.6px;top:601.18px;font-size:14.5px;color:#0c66e4;">DEMO-29</div>
<div class="t" style="left:662.2px;top:601.18px;font-size:14.5px;color:#292a2e;">Registering with valid data creates a new user account</div>
<svg class="a" style="left:1405px;top:606px" width="14" height="10" viewBox="0 0 14 10"><path d="M1.6 2h11M1.6 8.6h11" stroke="#ff8b00" stroke-width="2" stroke-linecap="round"/></svg>
<div class="t" style="left:1428.5px;top:601.18px;font-size:14.5px;color:#172b4d;">Medium</div>
<svg class="a" style="left:1686px;top:602px" width="18" height="19" viewBox="0 0 18 19"><g fill="none" stroke="#626f86" stroke-width="1.6"><path d="M1.8 13.4V2.4c0-.8.4-1.2 1.2-1.2h8.1"/><rect x="5.05" y="4.05" width="10" height="12.9" rx="1.8"/></g></svg>
<svg class="a" style="left:1722px;top:603px" width="17" height="17" viewBox="0 0 17 17"><g fill="#626f86"><rect x="5" y="0" width="6.5" height="1.6" rx=".6"/><rect x="0" y="1.2" width="16.3" height="2.2" rx="1"/><path d="M1 4.1h14.2l-1.4 10.9c-.1.7-.5 1-1.2 1H3.6c-.7 0-1.1-.3-1.2-1z"/></g></svg>
<div class="a" style="left:264px;top:687px;width:1629px;height:1px;background:#dfe1e6"></div>
<div class="a" style="left:327px;top:637px;width:1px;height:50px;background:#dfe1e6"></div>
<div class="a" style="left:1654px;top:637px;width:1px;height:50px;background:#dfe1e6"></div>
<svg class="a" style="left:276px;top:655px" width="10" height="15" viewBox="0 0 10 15"><g fill="#626f86"><circle cx="1.5" cy="1.5" r="1.4"/><circle cx="6.8" cy="1.5" r="1.4"/><circle cx="1.5" cy="6.9" r="1.4"/><circle cx="6.8" cy="6.9" r="1.4"/><circle cx="1.5" cy="12.2" r="1.4"/><circle cx="6.8" cy="12.2" r="1.4"/></g></svg>
<div class="a" style="left:296px;top:654px;width:16px;height:16px;border:1.5px solid #8590a2;border-radius:3px;background:#fff"></div>
<svg class="a" style="left:352px;top:654px" width="16" height="16" viewBox="0 0 16 16"><rect width="16" height="16" rx="3" fill="#145f37"/><circle cx="8" cy="8.6" r="5.9" fill="none" stroke="#fff" stroke-width="0.9"/><path d="M5.2 8.9l2.2 3.1L14 1.7" fill="none" stroke="#fff" stroke-width="2" stroke-linejoin="round" stroke-linecap="round"/></svg>
<div class="t" style="left:372.6px;top:652.18px;font-size:14.5px;color:#0c66e4;">DEMO-7</div>
<div class="t" style="left:662.2px;top:652.18px;font-size:14.5px;color:#292a2e;">Password strength requirements are enforced</div>
<svg class="a" style="left:1405px;top:657px" width="14" height="10" viewBox="0 0 14 10"><path d="M1.6 2h11M1.6 8.6h11" stroke="#ff8b00" stroke-width="2" stroke-linecap="round"/></svg>
<div class="t" style="left:1428.5px;top:652.18px;font-size:14.5px;color:#172b4d;">Medium</div>
<svg class="a" style="left:1686px;top:653px" width="18" height="19" viewBox="0 0 18 19"><g fill="none" stroke="#626f86" stroke-width="1.6"><path d="M1.8 13.4V2.4c0-.8.4-1.2 1.2-1.2h8.1"/><rect x="5.05" y="4.05" width="10" height="12.9" rx="1.8"/></g></svg>
<svg class="a" style="left:1722px;top:654px" width="17" height="17" viewBox="0 0 17 17"><g fill="#626f86"><rect x="5" y="0" width="6.5" height="1.6" rx=".6"/><rect x="0" y="1.2" width="16.3" height="2.2" rx="1"/><path d="M1 4.1h14.2l-1.4 10.9c-.1.7-.5 1-1.2 1H3.6c-.7 0-1.1-.3-1.2-1z"/></g></svg>
<div class="a" style="left:264px;top:738px;width:1629px;height:1px;background:#dfe1e6"></div>
<div class="a" style="left:327px;top:688px;width:1px;height:50px;background:#dfe1e6"></div>
<div class="a" style="left:1654px;top:688px;width:1px;height:50px;background:#dfe1e6"></div>
<svg class="a" style="left:276px;top:706px" width="10" height="15" viewBox="0 0 10 15"><g fill="#626f86"><circle cx="1.5" cy="1.5" r="1.4"/><circle cx="6.8" cy="1.5" r="1.4"/><circle cx="1.5" cy="6.9" r="1.4"/><circle cx="6.8" cy="6.9" r="1.4"/><circle cx="1.5" cy="12.2" r="1.4"/><circle cx="6.8" cy="12.2" r="1.4"/></g></svg>
<div class="a" style="left:296px;top:705px;width:16px;height:16px;border:1.5px solid #8590a2;border-radius:3px;background:#fff"></div>
<svg class="a" style="left:352px;top:705px" width="16" height="16" viewBox="0 0 16 16"><rect width="16" height="16" rx="3" fill="#145f37"/><circle cx="8" cy="8.6" r="5.9" fill="none" stroke="#fff" stroke-width="0.9"/><path d="M5.2 8.9l2.2 3.1L14 1.7" fill="none" stroke="#fff" stroke-width="2" stroke-linejoin="round" stroke-linecap="round"/></svg>
<div class="t" style="left:372.6px;top:703.18px;font-size:14.5px;color:#0c66e4;">DEMO-6</div>
<div class="t" style="left:662.2px;top:703.18px;font-size:14.5px;color:#292a2e;">Missing required fields prompts validation errors</div>
<svg class="a" style="left:1405px;top:708px" width="14" height="10" viewBox="0 0 14 10"><path d="M1.6 2h11M1.6 8.6h11" stroke="#ff8b00" stroke-width="2" stroke-linecap="round"/></svg>
<div class="t" style="left:1428.5px;top:703.18px;font-size:14.5px;color:#172b4d;">Medium</div>
<svg class="a" style="left:1686px;top:704px" width="18" height="19" viewBox="0 0 18 19"><g fill="none" stroke="#626f86" stroke-width="1.6"><path d="M1.8 13.4V2.4c0-.8.4-1.2 1.2-1.2h8.1"/><rect x="5.05" y="4.05" width="10" height="12.9" rx="1.8"/></g></svg>
<svg class="a" style="left:1722px;top:705px" width="17" height="17" viewBox="0 0 17 17"><g fill="#626f86"><rect x="5" y="0" width="6.5" height="1.6" rx=".6"/><rect x="0" y="1.2" width="16.3" height="2.2" rx="1"/><path d="M1 4.1h14.2l-1.4 10.9c-.1.7-.5 1-1.2 1H3.6c-.7 0-1.1-.3-1.2-1z"/></g></svg>
<div class="a" style="left:264px;top:789px;width:1629px;height:1px;background:#dfe1e6"></div>
<div class="a" style="left:327px;top:739px;width:1px;height:50px;background:#dfe1e6"></div>
<div class="a" style="left:1654px;top:739px;width:1px;height:50px;background:#dfe1e6"></div>
<svg class="a" style="left:276px;top:757px" width="10" height="15" viewBox="0 0 10 15"><g fill="#626f86"><circle cx="1.5" cy="1.5" r="1.4"/><circle cx="6.8" cy="1.5" r="1.4"/><circle cx="1.5" cy="6.9" r="1.4"/><circle cx="6.8" cy="6.9" r="1.4"/><circle cx="1.5" cy="12.2" r="1.4"/><circle cx="6.8" cy="12.2" r="1.4"/></g></svg>
<div class="a" style="left:296px;top:756px;width:16px;height:16px;border:1.5px solid #8590a2;border-radius:3px;background:#fff"></div>
<svg class="a" style="left:352px;top:756px" width="16" height="16" viewBox="0 0 16 16"><rect width="16" height="16" rx="3" fill="#145f37"/><circle cx="8" cy="8.6" r="5.9" fill="none" stroke="#fff" stroke-width="0.9"/><path d="M5.2 8.9l2.2 3.1L14 1.7" fill="none" stroke="#fff" stroke-width="2" stroke-linejoin="round" stroke-linecap="round"/></svg>
<div class="t" style="left:372.6px;top:754.18px;font-size:14.5px;color:#0c66e4;">DEMO-5</div>
<div class="t" style="left:662.2px;top:754.18px;font-size:14.5px;color:#292a2e;">Registering with invalid data (e.g., duplicate email) dis...</div>
<svg class="a" style="left:1405px;top:759px" width="14" height="10" viewBox="0 0 14 10"><path d="M1.6 2h11M1.6 8.6h11" stroke="#ff8b00" stroke-width="2" stroke-linecap="round"/></svg>
<div class="t" style="left:1428.5px;top:754.18px;font-size:14.5px;color:#172b4d;">Medium</div>
<svg class="a" style="left:1686px;top:755px" width="18" height="19" viewBox="0 0 18 19"><g fill="none" stroke="#626f86" stroke-width="1.6"><path d="M1.8 13.4V2.4c0-.8.4-1.2 1.2-1.2h8.1"/><rect x="5.05" y="4.05" width="10" height="12.9" rx="1.8"/></g></svg>
<svg class="a" style="left:1722px;top:756px" width="17" height="17" viewBox="0 0 17 17"><g fill="#626f86"><rect x="5" y="0" width="6.5" height="1.6" rx=".6"/><rect x="0" y="1.2" width="16.3" height="2.2" rx="1"/><path d="M1 4.1h14.2l-1.4 10.9c-.1.7-.5 1-1.2 1H3.6c-.7 0-1.1-.3-1.2-1z"/></g></svg>
<div class="a" style="left:264px;top:803px;width:1629px;height:50px;background:#f0f1f3;border:1px solid #d3d6dc;border-radius:4px"></div>
<svg class="a" style="left:277px;top:821px" width="10" height="15" viewBox="0 0 10 15"><g fill="#626f86"><circle cx="1.5" cy="1.5" r="1.4"/><circle cx="6.8" cy="1.5" r="1.4"/><circle cx="1.5" cy="6.9" r="1.4"/><circle cx="6.8" cy="6.9" r="1.4"/><circle cx="1.5" cy="12.2" r="1.4"/><circle cx="6.8" cy="12.2" r="1.4"/></g></svg>
<div class="a" style="left:305px;top:820px;width:16px;height:16px;border:1.5px solid #8590a2;border-radius:3px;background:#fff"></div>
<div class="a" style="left:337px;top:828px;width:20px;height:1px;background:#5b6880"></div>
<svg class="a" style="left:381px;top:820px" width="10" height="13" viewBox="0 0 10 13"><path d="M2.6 1.5l5 5-5 5" stroke="#5b6880" stroke-width="1.7" fill="none" stroke-linecap="round" stroke-linejoin="round"/></svg>
<svg class="a" style="left:415px;top:821px" width="16" height="14" viewBox="0 0 16 14"><path d="M2.05 10.8V2.9Q2.05 1.9 3.05 1.9H6.4Q7.1 1.9 7.5 2.6L8.3 4.1H13Q14 4.1 14 5.1V10.8Q14 11.8 13 11.8H3.05Q2.05 11.8 2.05 10.8Z" fill="none" stroke="#6b778c" stroke-width="1.6" stroke-linejoin="round"/></svg>
<div class="t" style="left:443.8px;top:818.38px;font-size:14.5px;color:#44546f;">Search functionality</div>
<svg class="a" style="left:1788px;top:819px" width="18" height="19" viewBox="0 0 18 19"><g fill="none" stroke="#626f86" stroke-width="1.6"><path d="M1.8 13.4V2.4c0-.8.4-1.2 1.2-1.2h8.1"/><rect x="5.05" y="4.05" width="10" height="12.9" rx="1.8"/></g></svg>
<svg class="a" style="left:1824px;top:820px" width="17" height="17" viewBox="0 0 17 17"><g fill="#626f86"><rect x="5" y="0" width="6.5" height="1.6" rx=".6"/><rect x="0" y="1.2" width="16.3" height="2.2" rx="1"/><path d="M1 4.1h14.2l-1.4 10.9c-.1.7-.5 1-1.2 1H3.6c-.7 0-1.1-.3-1.2-1z"/></g></svg>
<svg class="a" style="left:1858px;top:824px" width="22" height="8" viewBox="0 0 22 8"><g fill="#172b4d"><circle cx="3" cy="4" r="2.2"/><circle cx="10" cy="4" r="2.2"/><circle cx="17" cy="4" r="2.2"/></g></svg>
<div class="a" style="left:264px;top:865px;width:1629px;height:50px;background:#f0f1f3;border:1px solid #d3d6dc;border-radius:4px"></div>
<svg class="a" style="left:277px;top:883px" width="10" height="15" viewBox="0 0 10 15"><g fill="#626f86"><circle cx="1.5" cy="1.5" r="1.4"/><circle cx="6.8" cy="1.5" r="1.4"/><circle cx="1.5" cy="6.9" r="1.4"/><circle cx="6.8" cy="6.9" r="1.4"/><circle cx="1.5" cy="12.2" r="1.4"/><circle cx="6.8" cy="12.2" r="1.4"/></g></svg>
<div class="a" style="left:305px;top:882px;width:16px;height:16px;border:1.5px solid #8590a2;border-radius:3px;background:#fff"></div>
<div class="a" style="left:337px;top:890px;width:20px;height:1px;background:#5b6880"></div>
<svg class="a" style="left:381px;top:882px" width="10" height="13" viewBox="0 0 10 13"><path d="M2.6 1.5l5 5-5 5" stroke="#5b6880" stroke-width="1.7" fill="none" stroke-linecap="round" stroke-linejoin="round"/></svg>
<svg class="a" style="left:415px;top:883px" width="16" height="14" viewBox="0 0 16 14"><path d="M2.05 10.8V2.9Q2.05 1.9 3.05 1.9H6.4Q7.1 1.9 7.5 2.6L8.3 4.1H13Q14 4.1 14 5.1V10.8Q14 11.8 13 11.8H3.05Q2.05 11.8 2.05 10.8Z" fill="none" stroke="#6b778c" stroke-width="1.6" stroke-linejoin="round"/></svg>
<div class="t" style="left:443.8px;top:880.38px;font-size:14.5px;color:#44546f;">Payment gateway</div>
<svg class="a" style="left:1788px;top:881px" width="18" height="19" viewBox="0 0 18 19"><g fill="none" stroke="#626f86" stroke-width="1.6"><path d="M1.8 13.4V2.4c0-.8.4-1.2 1.2-1.2h8.1"/><rect x="5.05" y="4.05" width="10" height="12.9" rx="1.8"/></g></svg>
<svg class="a" style="left:1824px;top:882px" width="17" height="17" viewBox="0 0 17 17"><g fill="#626f86"><rect x="5" y="0" width="6.5" height="1.6" rx=".6"/><rect x="0" y="1.2" width="16.3" height="2.2" rx="1"/><path d="M1 4.1h14.2l-1.4 10.9c-.1.7-.5 1-1.2 1H3.6c-.7 0-1.1-.3-1.2-1z"/></g></svg>
<svg class="a" style="left:1858px;top:886px" width="22" height="8" viewBox="0 0 22 8"><g fill="#172b4d"><circle cx="3" cy="4" r="2.2"/><circle cx="10" cy="4" r="2.2"/><circle cx="17" cy="4" r="2.2"/></g></svg>
</div></body></html>
